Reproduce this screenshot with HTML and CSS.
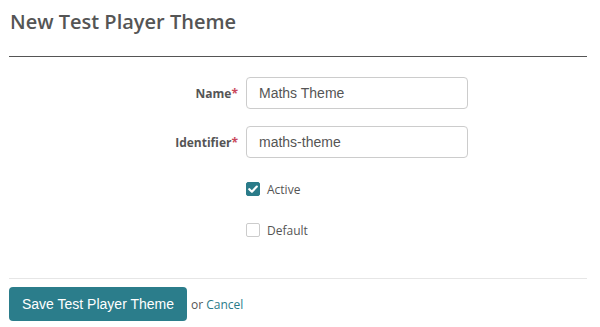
FILE: index.html
```html
<!DOCTYPE html>
<html>
	<head>
		<meta charset="UTF-8">
		<title>New Test Player Theme</title>
		<link rel="stylesheet" href="styles.css">
	</head>

	<body>
		<div class="page">
			<h1 class="page-title">New Test Player Theme</h1>
			<form class="theme-form">
				<div class="fields">
					<label class="field-label" for="name">Name<span class="req">*</span></label>
					<input class="field-input" id="name" type="text" value="Maths Theme">

					<label class="field-label" for="identifier">Identifier<span class="req">*</span></label>
					<input class="field-input" id="identifier" type="text" value="maths-theme">

					<span></span>
					<label class="check"><span class="box checked"><svg viewBox="0 0 14 14" width="14" height="14"><path d="M3.3 7.2 L5.9 9.7 L10.8 4.6" fill="none" stroke="#fff" stroke-width="2.2" stroke-linecap="round" stroke-linejoin="round"/></svg></span>Active</label>

					<span></span>
					<label class="check"><span class="box"></span>Default</label>
				</div>
				<div class="actions">
					<button type="button" class="btn-save">Save Test Player Theme</button>
					<span class="alt">or <a href="#">Cancel</a></span>
				</div>
			</form>
		</div>
	</body>

</html>
```

FILE: styles.css
```css
/* form page: header, two text fields, two checkboxes, footer with button */
body {
	margin: 0;
	background: #fff;
	font-family: "Open Sans", "Liberation Sans", sans-serif;
	color: #555;
}

.page {
	padding: 0 13px 0 9px;
}

.page-title {
	margin: 0;
	padding: 7px 0 19px 1px;
	font-size: 20px;
	font-weight: 600;
	line-height: 30px;
	color: #555;
	border-bottom: 1px solid #555;
}

.fields {
	display: grid;
	grid-template-columns: 229px 222px;
	column-gap: 8px;
	align-items: center;
	padding: 20px 0 41px;
	border-bottom: 1px solid #e6e6e6;
}

.field-label {
	text-align: right;
	font-size: 12px;
	font-weight: 700;
	color: #555;
	margin-bottom: 17px;
}

.req {
	color: #c9485b;
}

.field-input {
	box-sizing: border-box;
	height: 32px;
	margin: 0 0 17px;
	padding: 0 12px;
	border: 1px solid #ccc;
	border-radius: 4px;
	font-family: "Liberation Sans", Arial, sans-serif;
	font-size: 14px;
	color: #555;
	outline: none;
}

.check {
	display: flex;
	align-items: center;
	gap: 7px;
	height: 14px;
	margin: 7px 0 20px;
	font-size: 12px;
	color: #555;
}

.check:last-child {
	margin-bottom: 0;
}

.box {
	box-sizing: border-box;
	width: 14px;
	height: 14px;
	border: 1px solid #ccc;
	border-radius: 2px;
	display: flex;
}

.box.checked {
	background: #2a7b89;
	border-color: #2a7b89;
}

.box svg {
	margin: -1px;
}

.actions {
	display: flex;
	align-items: center;
	gap: 4px;
	padding-top: 8px;
}

.btn-save {
	height: 34px;
	padding: 0 13px;
	border: none;
	border-radius: 4px;
	background: #2b7d8b;
	color: #fff;
	font-family: "Liberation Sans", Arial, sans-serif;
	font-size: 14px;
}

.alt {
	font-size: 12px;
	color: #555;
}

.alt a {
	color: #2a7b89;
	text-decoration: none;
}
```
